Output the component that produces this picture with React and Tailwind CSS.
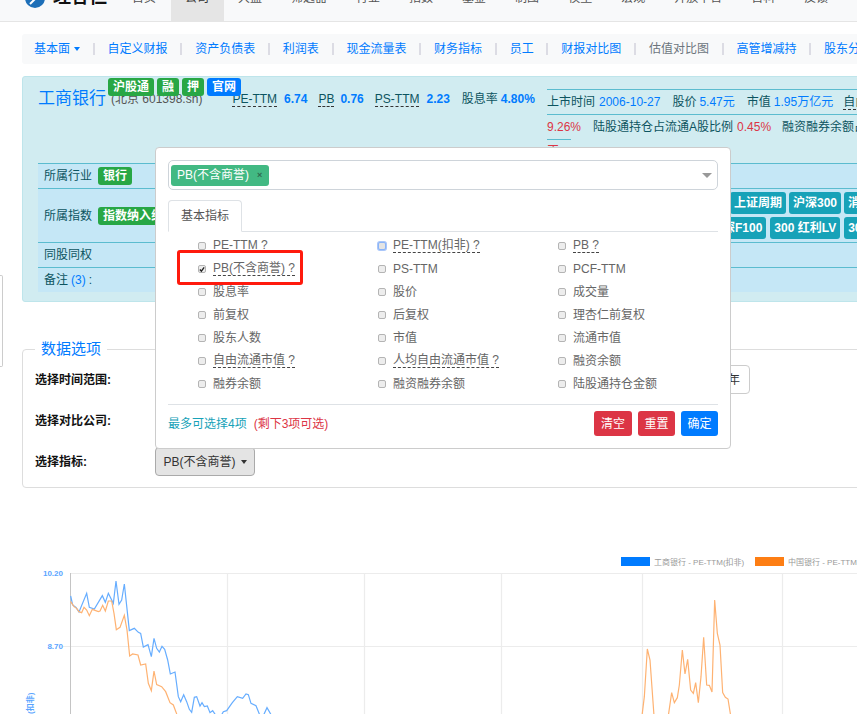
import React from 'react'

const navItems = ['首页', '公司', '大盘', '筛选器', '行业', '指数', '基金', '制图', '模型', '宏观', '开放平台', '百科', '反馈']
const subItems = ['自定义财报', '资产负债表', '利润表', '现金流量表', '财务指标', '员工', '财报对比图', '估值对比图', '高管增减持', '股东分析']

const metrics = [
    [['PE-TTM', true, false], ['PE-TTM(扣非)', true, true], ['PB', true, false]],
    [['PB(不含商誉)', true, false, true], ['PS-TTM'], ['PCF-TTM']],
    [['股息率'], ['股价'], ['成交量']],
    [['前复权'], ['后复权'], ['理杏仁前复权']],
    [['股东人数'], ['市值'], ['流通市值']],
    [['自由流通市值', true], ['人均自由流通市值', true], ['融资余额']],
    [['融券余额'], ['融资融券余额'], ['陆股通持仓金额']],
]

// 曲线坐标按截图放大 3 倍量取
const bluePts = [[212,138],[218,165],[228,172],[237,186],[260,130],[268,172],[283,177],[307,137],[316,157],[325,130],[340,160],[348,93],[357,163],[365,150],[373,102],[388,242],[403,235],[415,247],[422,250],[430,291],[444,284],[454,320],[462,265],[470,295],[478,306],[486,289],[494,298],[503,330],[511,372],[525,366],[535,440],[542,455],[551,434],[560,455],[568,478],[575,487],[583,442],[590,440],[600,468],[606,458],[613,470],[622,468],[630,488],[638,482],[650,500],[662,500],[670,485],[680,482],[697,458],[712,440],[728,445],[738,432],[745,434],[753,460],[768,467],[780,497],[790,497],[801,473],[812,492],[816,500]]
const orangePts = [[212,155],[222,170],[230,175],[237,185],[245,188],[252,172],[260,180],[268,197],[277,178],[295,185],[300,183],[308,166],[316,183],[325,153],[335,153],[342,190],[349,239],[360,232],[373,196],[381,240],[389,318],[398,312],[414,315],[422,345],[437,342],[445,400],[454,422],[462,363],[470,404],[485,410],[497,425],[510,458],[520,465],[532,497]]
const orangeRight = [[636,497],[643,440],[652,297],[660,330],[672,497]]
const orangeRight2 = [[715,497],[725,428],[733,458],[742,443],[748,405],[757,300],[765,372],[773,328],[782,420],[790,430],[797,398],[805,458],[813,380],[821,262],[830,405],[838,406],[846,426],[854,150],[862,250],[870,285],[878,428],[886,442],[894,447],[902,497]]

const toLine = (pts, offset = 0) => pts.map(([x, y]) => `${offset + x / 3},${y / 3}`).join(' ')

const Badge = ({ children, color = 'bg-[#28a745]' }) => (
    <span className={`${color} text-white font-bold text-[12px] leading-[18px] h-[18px] px-[5px] rounded-[3px] whitespace-nowrap shrink-0`}>
        {children}
    </span>
)

const TealBadge = ({ children, className = '' }) => (
    <span className={`bg-[#17a2b8] text-white font-bold text-[12px] leading-[22px] h-[22px] px-[4px] rounded-[3px] whitespace-nowrap shrink-0 ${className}`}>
        {children}
    </span>
)

const Dashed = ({ children }) => (
    <span className="border-b border-dashed border-[#333] leading-[14px] whitespace-nowrap">{children}</span>
)

const Check = ({ checked, focus }) => (
    <span
        className={`w-[8px] h-[8px] mt-[1px] rounded-[2px] border shrink-0 flex items-center justify-center ${
            focus ? 'border-[#8ab4f8] bg-[#e4e4e4] ring-1 ring-[#a9c6fa]' : 'border-[#b4b4b4] bg-[#ededed]'
        }`}
    >
        {checked && (
            <svg width="7" height="7" viewBox="0 0 7 7">
                <path d="M1 3.5 L2.8 5.5 L6 1" fill="none" stroke="#222" strokeWidth="1.6" />
            </svg>
        )}
    </span>
)

const MetricCell = ({ item }) => {
    const [label, hint, focus, checked] = item
    return (
        <div className="flex items-center gap-[7px] w-[180px] h-[23px] shrink-0">
            <Check checked={checked} focus={focus} />
            {hint ? (
                <span className="border-b border-dashed border-[#444] leading-[14px] whitespace-nowrap">{label} ?</span>
            ) : (
                <span className="whitespace-nowrap">{label}</span>
            )}
        </div>
    )
}

const Chart = () => (
    <svg width="857" height="164" viewBox="0 0 857 164" className="block">
        <g stroke="#ececec" strokeWidth="1.2">
            <line x1="70" y1="23.5" x2="857" y2="23.5" />
            <line x1="63" y1="96.5" x2="857" y2="96.5" />
            <line x1="227.5" y1="23" x2="227.5" y2="164" />
            <line x1="364.5" y1="23" x2="364.5" y2="164" />
            <line x1="501.5" y1="23" x2="501.5" y2="164" />
            <line x1="642.5" y1="23" x2="642.5" y2="164" />
            <line x1="782.5" y1="23" x2="782.5" y2="164" />
        </g>
        <line x1="70.5" y1="23" x2="70.5" y2="164" stroke="#c4c4c4" />
        <text x="63" y="26" textAnchor="end" fontSize="8" fontWeight="bold" fill="#5aa5ff">10.20</text>
        <text x="63" y="99" textAnchor="end" fontSize="8" fontWeight="bold" fill="#5aa5ff">8.70</text>
        <text transform="translate(33 164) rotate(-90)" fontSize="8" fill="#5aa5ff" fontWeight="bold">(扣非)</text>
        <rect x="621" y="7" width="29" height="9" fill="#007bff" />
        <text x="654" y="15" fontSize="8" fill="#999">工商银行 - PE-TTM(扣非)</text>
        <rect x="755" y="7" width="29" height="9" fill="#fd7e14" />
        <text x="788" y="15" fontSize="8" fill="#999">中国银行 - PE-TTM(扣非)</text>
        <polyline points={toLine(bluePts)} fill="none" stroke="#66adff" strokeWidth="1.2" />
        <polyline points={toLine(orangePts)} fill="none" stroke="#feb272" strokeWidth="1.2" />
        <polyline points={toLine(orangeRight, 430)} fill="none" stroke="#feb272" strokeWidth="1.2" />
        <polyline points={toLine(orangeRight2, 430)} fill="none" stroke="#feb272" strokeWidth="1.2" />
    </svg>
)

const Popover = () => (
    <div className="absolute left-[155px] top-[147px] w-[576px] h-[302px] bg-white border border-[#ccc] rounded-[4px] p-[12px] text-[12px] text-[#666]">
        <div className="h-[30px] border border-[#ced4da] rounded-[5px] flex items-center justify-between pl-[2px] pr-[5px]">
            <span className="h-[21px] w-[98px] bg-[#42b983] text-white rounded-[3px] flex items-center pl-[6px] gap-[8px] whitespace-nowrap">
                PB(不含商誉)
                <span className="text-[#2f6b50] text-[9px] font-bold leading-none">×</span>
            </span>
            <span className="w-0 h-0 border-x-[5px] border-x-transparent border-t-[5px] border-t-[#999]" />
        </div>
        <div className="mt-[10px] border-b border-[#dee2e6] h-[32px] flex">
            <span className="w-[74px] h-[32px] border border-[#dee2e6] border-b-white rounded-t-[4px] flex items-center justify-center text-[#555]">
                基本指标
            </span>
        </div>
        <div className="mt-[2px] pl-[30px]">
            {metrics.map((row, i) => (
                <div key={i} className="flex">
                    {row.map((item) => (
                        <MetricCell key={item[0]} item={item} />
                    ))}
                </div>
            ))}
        </div>
        <div className="mt-[9px] border-t border-[#dee2e6] pt-[6px] flex items-center justify-between">
            <span className="whitespace-nowrap">
                <span className="text-[#17a2b8]">最多可选择4项</span>
                <span className="text-[#dc3545] ml-[7px]">(剩下3项可选)</span>
            </span>
            <span className="flex gap-[6px]">
                <span className="w-[38px] h-[25px] rounded-[3px] bg-[#dc3545] text-white flex items-center justify-center">清空</span>
                <span className="w-[37px] h-[25px] rounded-[3px] bg-[#dc3545] text-white flex items-center justify-center">重置</span>
                <span className="w-[37px] h-[25px] rounded-[3px] bg-[#007bff] text-white flex items-center justify-center">确定</span>
            </span>
        </div>
    </div>
)

const App = () => {
    return (
        <div className="relative w-[857px] h-[714px] overflow-hidden bg-white text-[12px] text-[#212529] font-['Liberation_Sans','Noto_Sans_CJK_SC',sans-serif]">
            <div className="-mt-[28px] w-[1000px]">
                {/* 顶部导航，页面已滚动，只露出下半部分 */}
                <div className="h-[50px] bg-[#f8f9fa] border-b border-[#e5e5e5] flex items-center text-[#555]">
                    <svg width="20" height="20" viewBox="0 0 20 20" className="ml-[25px] mt-[3px] shrink-0">
                        <circle cx="10" cy="10" r="10" fill="#1d6fb8" />
                        <path d="M5 16 L17 4" stroke="#fff" strokeWidth="2" />
                    </svg>
                    <span className="ml-[8px] w-[64.5px] mt-[2px] text-[18px] font-bold text-[#111] whitespace-nowrap">理杏仁</span>
                    {navItems.map((item) => (
                        <span
                            key={item}
                            className={`h-[49px] flex items-center px-[14.5px] pt-[3px] whitespace-nowrap ${item === '公司' ? 'bg-[#e5e5e5] text-[#333]' : ''}`}
                        >
                            {item}
                        </span>
                    ))}
                </div>

                {/* 二级菜单 */}
                <div className="mt-[12px] ml-[22px] h-[30px] bg-[#f8f9fa] rounded-[3px] flex items-center pl-[12px] gap-[12.8px] text-[#007bff] whitespace-nowrap">
                    <span className="flex items-center gap-[4px]">
                        基本面
                        <span className="w-0 h-0 border-x-[3.5px] border-x-transparent border-t-[4px] border-t-[#007bff]" />
                    </span>
                    {subItems.map((item) => (
                        <React.Fragment key={item}>
                            <span className="w-[2px] h-[12px] bg-[#dcdce4]" />
                            <span className={item === '估值对比图' ? 'text-[#6c757d]' : ''}>{item}</span>
                        </React.Fragment>
                    ))}
                </div>

                {/* 公司信息卡片 */}
                <div className="mt-[12px] ml-[22px] h-[226px] bg-[#d1ecf1] border border-[#bee5eb] rounded-[3px] pl-[15px] text-[#0c5460]">
                    <div className="h-[86px] flex items-start">
                        <div className="relative w-[509px] pt-[8px] flex items-center whitespace-nowrap">
                            <span className="text-[17px] leading-[28px] text-[#007bff]">工商银行</span>
                            <span className="ml-[5px] text-[#555]">(北京 601398.sh)</span>
                            <div className="absolute left-[70px] top-[1px] flex gap-[3px]">
                                <Badge>沪股通</Badge>
                                <Badge>融</Badge>
                                <Badge>押</Badge>
                                <Badge color="bg-[#007bff]">官网</Badge>
                            </div>
                            <span className="ml-[30px]"><Dashed>PE-TTM</Dashed></span>
                            <span className="ml-[7px] font-bold text-[#007bff]">6.74</span>
                            <span className="ml-[11px]"><Dashed>PB</Dashed></span>
                            <span className="ml-[6px] font-bold text-[#007bff]">0.76</span>
                            <span className="ml-[11px]"><Dashed>PS-TTM</Dashed></span>
                            <span className="ml-[7px] font-bold text-[#007bff]">2.23</span>
                            <span className="ml-[12px]">股息率</span>
                            <span className="ml-[3px] font-bold text-[#007bff]">4.80%</span>
                        </div>
                        <div className="mt-[12px] w-[320px] whitespace-nowrap">
                            <div className="h-[25px] border-t border-[#5bbccf] flex items-center">
                                上市时间<span className="ml-[4px] text-[#007bff]">2006-10-27</span>
                                <span className="ml-[12px]">股价</span>
                                <span className="ml-[3px] text-[#007bff]">5.47元</span>
                                <span className="ml-[12px]">市值</span>
                                <span className="ml-[3px] text-[#007bff]">1.95万亿元</span>
                                <span className="ml-[10px] border-b border-dashed border-[#333] leading-[14px]">自由流通</span>
                            </div>
                            <div className="h-[25px] border-t border-[#5bbccf] flex items-center">
                                <span className="text-[#dc3545]">9.26%</span>
                                <span className="ml-[12px]">陆股通持仓占流通A股比例</span>
                                <span className="ml-[4px] text-[#dc3545]">0.45%</span>
                                <span className="ml-[11px]">融资融券余额占流通市值</span>
                            </div>
                            <div className="w-[24px] h-[24px] border-t border-[#5bbccf] text-[#dc3545] leading-[22px]">正</div>
                        </div>
                    </div>
                    <div className="bg-[#c5e7f6] whitespace-nowrap">
                        <div className="h-[25px] border-t border-[#5bbccf] flex items-center pl-[6px]">
                            <span className="w-[54px]">所属行业</span>
                            <Badge>银行</Badge>
                        </div>
                        <div className="h-[54px] border-t border-[#5bbccf] flex items-center pl-[6px]">
                            <span className="w-[54px]">所属指数</span>
                            <span className="w-[72px] shrink-0 flex"><Badge>指数纳入组成</Badge></span>
                            <div className="ml-[537px] flex flex-col gap-[3px]">
                                <div className="flex gap-[3px] ml-[23px]">
                                    <TealBadge>上证周期</TealBadge>
                                    <TealBadge>沪深300</TealBadge>
                                    <TealBadge>消费</TealBadge>
                                </div>
                                <div className="flex gap-[4px]">
                                    <TealBadge>沪深F100</TealBadge>
                                    <TealBadge>300 红利LV</TealBadge>
                                    <TealBadge>300</TealBadge>
                                </div>
                            </div>
                        </div>
                        <div className="h-[25px] border-t border-[#5bbccf] flex items-center pl-[6px]">同股同权</div>
                        <div className="h-[25px] border-t border-[#5bbccf] flex items-center pl-[6px]">
                            备注 <span className="mx-[3px] text-[#007bff]">(3)</span> :
                        </div>
                    </div>
                </div>

                {/* 数据选项 */}
                <fieldset className="mt-[37px] ml-[22px] h-[149px] border border-[#ddd] rounded-[4px] pl-[12px]">
                    <legend className="px-[6px] text-[15px] leading-[20px] text-[#007bff]">数据选项</legend>
                    <div className="flex flex-col gap-[12px] pt-[6px] font-bold text-[#111]">
                        <div className="h-[29px] flex items-center">
                            <span className="w-[120px]">选择时间范围:</span>
                            <span className="w-[595px] h-[29px] border border-[#ccc] rounded-[4px] flex items-center justify-end pr-[9px] font-normal text-[#333]">年</span>
                        </div>
                        <div className="h-[29px] flex items-center">
                            <span className="w-[120px]">选择对比公司:</span>
                        </div>
                        <div className="h-[29px] flex items-center">
                            <span className="w-[120px]">选择指标:</span>
                            <span className="w-[100px] h-[29px] bg-[#e4e4e4] border border-[#aaa] rounded-[4px] flex items-center justify-center gap-[5px] font-normal text-[#333]">
                                PB(不含商誉)
                                <span className="w-0 h-0 border-x-[3.5px] border-x-transparent border-t-[4px] border-t-[#333]" />
                            </span>
                        </div>
                    </div>
                </fieldset>

                <div className="mt-[62px]">
                    <Chart />
                </div>
            </div>

            {/* 左侧贴边的小面板 */}
            <div className="absolute left-0 top-[275px] w-[3px] h-[92px] border border-l-0 border-[#ccc] rounded-r-[2px]" />

            <Popover />

            {/* 红色标注框 */}
            <div className="absolute left-[177px] top-[250px] w-[126px] h-[35px] border-[3px] border-[#ff1a0d] rounded-[3px]" />
        </div>
    )
}

export default App
